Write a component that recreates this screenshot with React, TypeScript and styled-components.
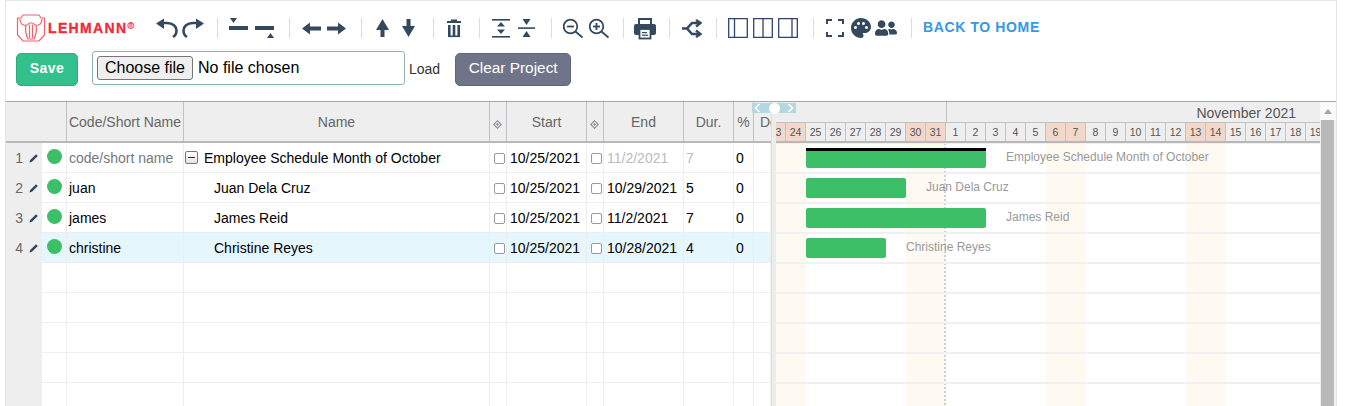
import React from "react";
import styled, { createGlobalStyle } from "styled-components";
import { MdPalette } from "react-icons/md";
import { FaUserFriends } from "react-icons/fa";

const INK = "#34495e";

const GlobalStyle = createGlobalStyle`
  html, body {
    margin: 0;
    height: 100%;
    overflow: hidden;
    background: #fff;
    font-family: "Liberation Sans", Arial, sans-serif;
  }
`;

const Frame = styled.div`
  box-sizing: border-box;
  width: 1332px;
  height: 406px;
  margin-left: 5px;
  border-top: 1px solid #e6e6e6;
  border-left: 1px solid #e6e6e6;
  border-right: 1px solid #e6e6e6;
  overflow: hidden;
`;

const Toolbar = styled.div`
  box-sizing: border-box;
  height: 100px;
  padding: 13px 0 0 10px;
`;

const ToolRow = styled.div`
  display: flex;
  align-items: center;
  height: 28px;
`;

const Logo = styled.div`
  display: flex;
  align-items: center;
  width: 121px;
  margin-right: 19px;
  gap: 2px;
`;

const LogoText = styled.span`
  color: #f5283a;
  font-size: 14px;
  font-weight: 700;
  letter-spacing: 1.35px;
  -webkit-text-stroke: 0.3px #f5283a;

  sup {
    font-size: 9px;
    letter-spacing: 0;
    vertical-align: 4px;
    line-height: 0;
    color: #f78a92;
  }
`;

const ToolGroup = styled.div<{ $gap?: number }>`
  display: flex;
  align-items: center;
  gap: ${(p) => p.$gap ?? 0}px;
`;

const Sep = styled.span<{ $l: number; $r: number }>`
  width: 1px;
  height: 20px;
  background: #ddd;
  margin: 0 ${(p) => p.$r}px 0 ${(p) => p.$l}px;
`;

const Icon = styled.svg<{ $flip?: boolean }>`
  display: block;
  flex: none;
  height: 24px;
  fill: ${INK};
  transform: ${(p) => (p.$flip ? "scaleX(-1)" : "none")};
`;

const Line = styled.path<{ $w?: number }>`
  fill: none;
  stroke: ${INK};
  stroke-width: ${(p) => p.$w ?? 2}px;
`;

const PaneLine = styled.path`
  fill: none;
  stroke: #2f4370;
  stroke-width: 1.3px;
`;

const PaletteIcon = styled(MdPalette)`
  flex: none;
  margin: 0 -4px 0 -1px;
`;

const BackLink = styled.a`
  margin-top: -2px;
  color: #3498e8;
  font-size: 14px;
  font-weight: 700;
  letter-spacing: 0.62px;
  text-decoration: none;
  white-space: nowrap;
`;

const FormRow = styled.div`
  display: flex;
  align-items: center;
  height: 34px;
  margin-top: 9px;
`;

const SaveButton = styled.button`
  box-sizing: border-box;
  width: 62px;
  height: 33px;
  margin: 2px 14px 0 0;
  padding: 0 0 2px;
  background: #34c08c;
  border: 1px solid #2eae7e;
  border-radius: 5px;
  color: #fff;
  font: 700 14px "Liberation Sans", Arial, sans-serif;
  letter-spacing: 0.5px;
`;

const FileBox = styled.label`
  box-sizing: border-box;
  display: flex;
  align-items: center;
  gap: 5px;
  width: 313px;
  height: 34px;
  padding: 0 4px;
  background: #fff;
  border: 1px solid #8fb3b3;
  border-radius: 3px;
  font-size: 16px;
  color: #000;

  input {
    display: none;
  }
`;

const ChooseButton = styled.span`
  box-sizing: border-box;
  width: 96px;
  height: 24px;
  background: #efefef;
  border: 1px solid #767676;
  border-radius: 3px;
  line-height: 22px;
  text-align: center;
`;

const LoadLabel = styled.label`
  margin: 1px 15px 0 4px;
  font-size: 14px;
  color: #333;
`;

const ClearButton = styled.button`
  box-sizing: border-box;
  width: 116px;
  height: 33px;
  margin-top: 2px;
  padding: 0 0 2px;
  background: #6f7489;
  border: 1px solid #62667a;
  border-radius: 5px;
  color: #fff;
  font: 15.4px "Liberation Sans", Arial, sans-serif;
`;

const Workspace = styled.div`
  position: relative;
  display: flex;
  height: 305px;
  border-top: 1px solid #a8a8a8;
  overflow: hidden;
`;

const TablePane = styled.div`
  flex: none;
  width: 765px;
  overflow: hidden;
`;

const COLUMNS = "36px 25px 117px 306px 17px 80px 17px 80px 50px 20px 17px";

const HeadRow = styled.div`
  box-sizing: border-box;
  display: grid;
  grid-template-columns: ${COLUMNS};
  height: 41px;
  background: #eee;
  border-bottom: 2px solid #b8b8b8;
`;

const HeadCell = styled.div<{ $plain?: boolean }>`
  display: flex;
  align-items: center;
  justify-content: center;
  overflow: hidden;
  white-space: nowrap;
  border-right: ${(p) => (p.$plain ? "none" : "1px solid #c2c2c2")};
  color: #666;
  font-size: 14px;
`;

const ClippedHeadCell = styled(HeadCell)`
  justify-content: flex-start;
  padding-left: 6px;
`;

const Diamond = styled.svg`
  width: 9px;
  height: 9px;
  margin: 6px 2px 0 0;
  fill: #8a8a9a;
`;

const BodyRow = styled.div<{ $selected?: boolean }>`
  box-sizing: border-box;
  display: grid;
  grid-template-columns: ${COLUMNS};
  height: 30px;
  background: ${(p) => (p.$selected ? "#e6f6fd" : "#fff")};
  border-bottom: 1px solid #eee;
`;

const GutterCell = styled.div`
  display: flex;
  align-items: center;
  justify-content: flex-end;
  gap: 6px;
  margin-bottom: -1px;
  padding-right: 3px;
  background: #eee;
  color: #666;
  font-size: 14px;
`;

const Pencil = styled.svg`
  width: 10px;
  height: 10px;
  fill: ${INK};
`;

const Cell = styled.div<{ $muted?: "soft" | "faint"; $indent?: number }>`
  display: flex;
  align-items: center;
  overflow: hidden;
  white-space: nowrap;
  border-right: 1px solid #eee;
  padding-left: ${(p) => p.$indent ?? 2}px;
  font-size: 14px;
  color: ${(p) => (p.$muted === "soft" ? "#777" : p.$muted === "faint" ? "#bbb" : "#000")};
`;

const StatusDot = styled.span`
  width: 15px;
  height: 15px;
  margin: -3px 0 0 5px;
  border-radius: 50%;
  background: #3cbf66;
`;

const CollapseBox = styled.span`
  position: relative;
  box-sizing: border-box;
  flex: none;
  width: 13px;
  height: 13px;
  margin-right: 6px;
  background: linear-gradient(#fff, #e4e4e4);
  border: 1px solid #777;
  border-radius: 2px;

  &::after {
    content: "";
    position: absolute;
    left: 2px;
    right: 2px;
    top: 5px;
    height: 1px;
    background: #333;
  }
`;

const CheckBox = styled.span`
  box-sizing: border-box;
  width: 11px;
  height: 11px;
  margin: 1px 0 0 2px;
  background: #fff;
  border: 1px solid #999;
  border-radius: 2px;
`;

const Splitter = styled.div`
  box-sizing: border-box;
  flex: none;
  width: 5px;
  background: #ececec;
  border-left: 1px solid #ddd;
`;

const SplitHandle = styled.div`
  position: absolute;
  left: 746px;
  top: 1px;
  display: flex;
  align-items: center;
  justify-content: space-between;
  width: 44px;
  height: 10px;
  padding: 0 2px;
  box-sizing: border-box;
  background: #b3d8e4;
`;

const Chevron = styled.svg`
  width: 7px;
  height: 10px;
  fill: none;
  stroke: #fff;
  stroke-width: 1.6px;
`;

const HandleKnob = styled.span`
  width: 11px;
  height: 11px;
  border-radius: 50%;
  background: #fff;
`;

const GanttPane = styled.div`
  position: relative;
  flex: none;
  width: 544px;
  overflow: hidden;
`;

const MonthRow = styled.div`
  display: flex;
  height: 20px;
  background: #eee;
  color: #555;
  font-size: 14px;
`;

const Month = styled.div<{ $w?: number }>`
  box-sizing: border-box;
  display: flex;
  align-items: center;
  justify-content: flex-end;
  flex: ${(p) => (p.$w ? `0 0 ${p.$w}px` : "1")};
  padding-right: ${(p) => (p.$w ? 0 : 24)}px;
  border-right: ${(p) => (p.$w ? "1px solid #c2c2c2" : "none")};
  line-height: 22px;
  padding-top: 2px;
`;

const DayRow = styled.div`
  box-sizing: border-box;
  display: flex;
  height: 21px;
  margin-left: -10px;
  background: #eee;
  border-top: 1px solid #c2c2c2;
  border-bottom: 2px solid #b8b8b8;
`;

const Day = styled.div<{ $weekend?: boolean }>`
  box-sizing: border-box;
  flex: 0 0 20px;
  border-right: 1px solid #c2c2c2;
  background: ${(p) => (p.$weekend ? "#f2d8cb" : "#eee")};
  color: #555;
  font-size: 10.5px;
  line-height: 18px;
  text-align: center;
`;

const GanttBody = styled.div`
  position: relative;
`;

const BandLayer = styled.div`
  position: absolute;
  inset: 0 0 0 -10px;
  display: flex;
`;

const Band = styled.div<{ $weekend?: boolean; $today?: boolean }>`
  box-sizing: border-box;
  flex: 0 0 20px;
  background: ${(p) => (p.$weekend ? "#fffaf1" : "transparent")};
  border-right: ${(p) => (p.$today ? "2px dotted #cfcfcf" : "none")};
`;

const BarRow = styled.div`
  position: relative;
  box-sizing: border-box;
  display: flex;
  height: 30px;
  padding: 4px 0 0 30px;
  border-top: 1px solid #f0f0f0;
  border-bottom: 1px solid #f0f0f0;
`;

const Bar = styled.div<{ $days: number; $summary?: boolean }>`
  box-sizing: border-box;
  flex: none;
  width: ${(p) => p.$days * 20}px;
  height: 20px;
  background: #3cbf66;
  border-top: ${(p) => (p.$summary ? "3px solid #000" : "none")};
  border-radius: ${(p) => (p.$summary ? "0 0 2px 2px" : "2px")};
`;

const BarLabel = styled.span`
  margin: 2px 0 0 20px;
  color: #999;
  font-size: 12px;
  line-height: 14px;
  white-space: nowrap;
`;

const Scrollbar = styled.div`
  flex: none;
  display: flex;
  flex-direction: column;
  width: 16px;
  background: #f1f1f1;
`;

const ScrollUp = styled.div`
  display: flex;
  justify-content: center;
  align-items: center;
  flex: 0 0 18px;
  background: #fafafa;

  &::before {
    content: "";
    border: 4px solid transparent;
    border-top: none;
    border-bottom: 5px solid #a3a3a3;
  }
`;

const ScrollThumb = styled.div`
  flex: 1;
  margin: 0 2px 0 1px;
  background: #b9b9b9;
`;

type Task = {
  no: number;
  code: string;
  name: string;
  end: string;
  dur: number;
  summary?: boolean;
  selected?: boolean;
};

const tasks: Task[] = [
  { no: 1, code: "code/short name", name: "Employee Schedule Month of October", end: "11/2/2021", dur: 7, summary: true },
  { no: 2, code: "juan", name: "Juan Dela Cruz", end: "10/29/2021", dur: 5 },
  { no: 3, code: "james", name: "James Reid", end: "11/2/2021", dur: 7 },
  { no: 4, code: "christine", name: "Christine Reyes", end: "10/28/2021", dur: 4, selected: true },
];

const emptyRows = [5, 6, 7, 8, 9];

const days = [23, 24, 25, 26, 27, 28, 29, 30, 31, 1, 2, 3, 4, 5, 6, 7, 8, 9, 10, 11, 12, 13, 14, 15, 16, 17, 18, 19];
const weekends = [23, 24, 30, 31, 6, 7, 13, 14];

const DiamondIcon = () => (
  <Diamond viewBox="0 0 9 9">
    <path d="M4.5 0 9 4.5 4.5 9 0 4.5Z M4.5 1.6 1.6 4.5 4.5 7.4 7.4 4.5Z" fillRule="evenodd" />
    <path d="M4.5 3 6 4.5 4.5 6 3 4.5Z" />
  </Diamond>
);

const LogoMark = () => (
  <svg width="30" height="28" viewBox="0 0 30 28" fill="none" stroke="#f5606c" strokeWidth="1.2">
    <path d="M7 1H23L25 4H28.5V21L23 27H7L1.5 21V4H5Z" />
    <path d="M4 5C4 10 7 12 11 11C13 8 17 8 19 11C23 12 26 10 26 5" />
    <path d="M10 11C9 16 10 21 12 25H18C20 21 21 16 20 11" />
    <path d="M13.5 24V10.5M16.5 24V10.5" />
  </svg>
);

const UndoIcon = ({ flip }: { flip?: boolean }) => (
  <Icon width="22" viewBox="0 0 22 24" $flip={flip}>
    <path d="M0 7.5 8 2.5V13Z" />
    <Line $w={2.6} d="M7 7H11C17 7 20.5 10.5 20.5 14.5C20.5 17 19.5 19.5 17 21" />
  </Icon>
);

const ToolIcons = {
  IndentUp: () => (
    <Icon width="19" viewBox="0 0 19 24">
      <path d="M1 2H8L4.5 7Z" />
      <rect y="10" width="19" height="4" />
    </Icon>
  ),
  IndentDown: () => (
    <Icon width="19" viewBox="0 0 19 24">
      <rect y="10" width="19" height="4" />
      <path d="M15.5 17 19 22H12Z" />
    </Icon>
  ),
  Arrow: ({ flip }: { flip?: boolean }) => (
    <Icon width="19" viewBox="0 0 19 24" $flip={flip}>
      <path d="M0 12.5 8 6.5V18.5Z" />
      <rect x="7" y="10.5" width="12" height="4" />
    </Icon>
  ),
  Up: () => (
    <Icon width="13" viewBox="0 0 13 24">
      <path d="M6.5 3 13 14H0Z" />
      <rect x="4.5" y="12" width="4" height="9" />
    </Icon>
  ),
  Down: () => (
    <Icon width="13" viewBox="0 0 13 24">
      <path d="M6.5 21 13 10H0Z" />
      <rect x="4.5" y="3" width="4" height="9" />
    </Icon>
  ),
  Trash: () => (
    <Icon width="14" viewBox="0 0 14 24">
      <rect x="4" y="3.5" width="6" height="1.5" />
      <rect y="5" width="14" height="2" />
      <path d="M1 9H3.6V20H1Z M5.7 9H8.3V20H5.7Z M10.4 9H13V20H10.4Z" />
      <rect x="1" y="19.5" width="12" height="1.6" />
    </Icon>
  ),
  Expand: () => (
    <Icon width="18" viewBox="0 0 18 24">
      <rect y="3" width="18" height="1.6" />
      <rect y="20" width="18" height="1.6" />
      <path d="M9 6 13 10.5H5Z M9 18 13 13.5H5Z" />
    </Icon>
  ),
  Collapse: () => (
    <Icon width="17" viewBox="0 0 17 24">
      <rect y="11.3" width="17" height="1.6" />
      <path d="M4.5 3H12.5L8.5 9Z M8.5 15 12.5 21H4.5Z" />
    </Icon>
  ),
  Zoom: ({ plus }: { plus?: boolean }) => (
    <Icon width="20" viewBox="0 0 20 24">
      <circle cx="7.5" cy="10.5" r="6.8" fill="none" stroke={INK} strokeWidth="1.8" />
      <Line $w={1.9} d="M12.5 15.5 19.5 21.5" />
      <rect x="4" y="9.6" width="7" height="1.8" />
      {plus && <rect x="6.6" y="7" width="1.8" height="7" />}
    </Icon>
  ),
  Print: () => (
    <Icon width="22" viewBox="0 0 22 24">
      <path d="M4 2H18V8H16V4H6V8H4Z" />
      <rect y="8" width="22" height="11" rx="2" />
      <rect x="5.5" y="13" width="11" height="9.5" fill="#fff" stroke={INK} strokeWidth="1.8" />
      <rect x="8" y="16" width="5" height="1.2" />
      <rect x="8" y="18.6" width="6" height="1.2" />
    </Icon>
  ),
  Branch: () => (
    <Icon width="20" viewBox="0 0 20 24">
      <Line $w={2.6} d="M0 12.5H5L10 7H18M5 12.5 10 18H18" />
      <Line $w={2.4} d="M14 4 18.5 7 14 10.5M14 14.5 18.5 18 14 21" />
    </Icon>
  ),
  Pane: ({ at }: { at: number }) => (
    <Icon width="20" viewBox="0 0 20 24">
      <PaneLine d={`M0.7 2.7H19.3V21.3H0.7Z M${at} 2.7V21.3`} />
    </Icon>
  ),
  Fullscreen: () => (
    <Icon width="18" viewBox="0 0 18 24">
      <Line $w={2} d="M1 8V4H6M12 4H17V8M17 16V20H12M6 20H1V16" />
    </Icon>
  ),
};

const App = () => {
  const { IndentUp, IndentDown, Arrow, Up, Down, Trash, Expand, Collapse, Zoom, Print, Branch, Pane, Fullscreen } = ToolIcons;

  return (
    <>
      <GlobalStyle />
      <Frame>
        <Toolbar>
          <ToolRow>
            <Logo>
              <LogoMark />
              <LogoText>
                LEHMANN<sup>®</sup>
              </LogoText>
            </Logo>
            <ToolGroup $gap={4}>
              <UndoIcon />
              <UndoIcon flip />
            </ToolGroup>
            <Sep $l={13} $r={11} />
            <ToolGroup $gap={7}>
              <IndentUp />
              <IndentDown />
            </ToolGroup>
            <Sep $l={15} $r={12} />
            <ToolGroup $gap={6}>
              <Arrow />
              <Arrow flip />
            </ToolGroup>
            <Sep $l={15} $r={14} />
            <ToolGroup $gap={13}>
              <Up />
              <Down />
            </ToolGroup>
            <Sep $l={18} $r={13} />
            <Trash />
            <Sep $l={18} $r={12} />
            <ToolGroup $gap={8}>
              <Expand />
              <Collapse />
            </ToolGroup>
            <Sep $l={16} $r={11} />
            <ToolGroup $gap={6}>
              <Zoom />
              <Zoom plus />
            </ToolGroup>
            <Sep $l={14} $r={10} />
            <Print />
            <Sep $l={13} $r={12} />
            <Branch />
            <Sep $l={14} $r={11} />
            <ToolGroup $gap={5}>
              <Pane at={6.5} />
              <Pane at={10} />
              <Pane at={14} />
            </ToolGroup>
            <Sep $l={15} $r={12} />
            <ToolGroup $gap={6}>
              <Fullscreen />
              <PaletteIcon size={24} color={INK} />
              <FaUserFriends size={22} color={INK} />
            </ToolGroup>
            <Sep $l={14} $r={11} />
            <BackLink href="#">BACK TO HOME</BackLink>
          </ToolRow>
          <FormRow>
            <SaveButton>Save</SaveButton>
            <FileBox>
              <input type="file" />
              <ChooseButton>Choose file</ChooseButton>
              No file chosen
            </FileBox>
            <LoadLabel>Load</LoadLabel>
            <ClearButton>Clear Project</ClearButton>
          </FormRow>
        </Toolbar>

        <Workspace>
          <TablePane>
            <HeadRow>
              <HeadCell $plain />
              <HeadCell />
              <HeadCell>Code/Short Name</HeadCell>
              <HeadCell>Name</HeadCell>
              <HeadCell>
                <DiamondIcon />
              </HeadCell>
              <HeadCell>Start</HeadCell>
              <HeadCell>
                <DiamondIcon />
              </HeadCell>
              <HeadCell>End</HeadCell>
              <HeadCell>Dur.</HeadCell>
              <HeadCell>%</HeadCell>
              <ClippedHeadCell $plain>Dep.</ClippedHeadCell>
            </HeadRow>
            {tasks.map((task) => (
              <BodyRow key={task.no} $selected={task.selected}>
                <GutterCell>
                  {task.no}
                  <Pencil viewBox="0 0 10 10">
                    <path d="M0.5 9.5 1.2 7 7 1.2 8.8 3 3 8.8Z" />
                  </Pencil>
                </GutterCell>
                <Cell $indent={0}>
                  <StatusDot />
                </Cell>
                <Cell $muted={task.summary ? "soft" : undefined}>{task.code}</Cell>
                <Cell $indent={task.summary ? 1 : 30}>
                  {task.summary && <CollapseBox />}
                  {task.name}
                </Cell>
                <Cell>
                  <CheckBox />
                </Cell>
                <Cell $indent={3}>10/25/2021</Cell>
                <Cell>
                  <CheckBox />
                </Cell>
                <Cell $indent={3} $muted={task.summary ? "faint" : undefined}>
                  {task.end}
                </Cell>
                <Cell $muted={task.summary ? "faint" : undefined}>{task.dur}</Cell>
                <Cell>0</Cell>
                <Cell />
              </BodyRow>
            ))}
            {emptyRows.map((no) => (
              <BodyRow key={no}>
                <GutterCell />
                <Cell />
                <Cell />
                <Cell />
                <Cell />
                <Cell />
                <Cell />
                <Cell />
                <Cell />
                <Cell />
                <Cell />
              </BodyRow>
            ))}
          </TablePane>

          <Splitter />

          <GanttPane>
            <MonthRow>
              <Month $w={171} />
              <Month>November 2021</Month>
            </MonthRow>
            <DayRow>
              {days.map((day) => (
                <Day key={day} $weekend={weekends.includes(day)}>
                  {day}
                </Day>
              ))}
            </DayRow>
            <GanttBody>
              <BandLayer>
                {days.map((day) => (
                  <Band key={day} $weekend={weekends.includes(day)} $today={day === 31} />
                ))}
              </BandLayer>
              {tasks.map((task) => (
                <BarRow key={task.no}>
                  <Bar $days={task.dur === 7 ? 9 : task.dur} $summary={task.summary} />
                  <BarLabel>{task.name}</BarLabel>
                </BarRow>
              ))}
              {emptyRows.map((no) => (
                <BarRow key={no} />
              ))}
            </GanttBody>
          </GanttPane>

          <Scrollbar>
            <ScrollUp />
            <ScrollThumb />
          </Scrollbar>

          <SplitHandle>
            <Chevron viewBox="0 0 7 10">
              <path d="M5.5 1 1.5 5 5.5 9" />
            </Chevron>
            <HandleKnob />
            <Chevron viewBox="0 0 7 10">
              <path d="M1.5 1 5.5 5 1.5 9" />
            </Chevron>
          </SplitHandle>
        </Workspace>
      </Frame>
    </>
  );
};

export default App;
